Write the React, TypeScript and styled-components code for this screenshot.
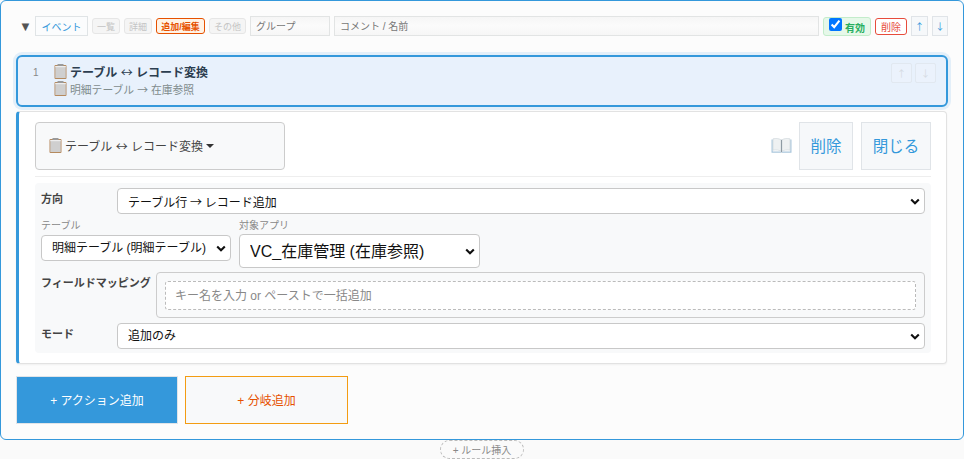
import styled, { createGlobalStyle } from "styled-components";

const chevron =
  "url(\"data:image/svg+xml,%3Csvg xmlns='http://www.w3.org/2000/svg' width='10' height='7' viewBox='0 0 10 7'%3E%3Cpath d='M1.2 1.4 5 5.2l3.8-3.8' fill='none' stroke='%23111' stroke-width='2.1'/%3E%3C/svg%3E\")";

const arrowFont = `"Noto Sans CJK JP", sans-serif`;

const GlobalStyle = createGlobalStyle`
  html, body {
    margin: 0;
    padding: 0;
    background: #fafafa;
    font-family: "Liberation Sans", "Noto Sans CJK JP", sans-serif;
    color: #2c3e50;
  }
  * {
    box-sizing: border-box;
  }
`;

const Page = styled.div`
  width: 964px;
  height: 459px;
  overflow: hidden;
`;

const RulePanel = styled.div`
  height: 440px;
  padding: 15px 15px 0;
  background: #fcfcfc;
  border: 1px solid #3498db;
  border-radius: 6px;
`;

const Header = styled.div`
  display: flex;
  align-items: center;
  gap: 4px;
  height: 20px;
  margin-bottom: 19px;
`;

const Toggle = styled.span`
  width: 15px;
  padding-left: 3px;
  font-size: 13px;
  color: #555;
`;

const EventButton = styled.button`
  width: 53px;
  height: 20px;
  padding: 0;
  font: inherit;
  font-size: 10px;
  color: #3498db;
  background: #fbfcfd;
  border: 1px solid #e0e4e6;
`;

const ScreenTag = styled.span<{ $w: number; $active?: boolean }>`
  display: flex;
  align-items: center;
  justify-content: center;
  width: ${({ $w }) => $w}px;
  height: 16px;
  font-size: 9px;
  font-weight: ${({ $active }) => ($active ? 700 : 400)};
  color: ${({ $active }) => ($active ? "#e65100" : "#c4c4c4")};
  background: ${({ $active }) => ($active ? "#fff3e6" : "#f5f5f5")};
  border: 1px solid ${({ $active }) => ($active ? "#e65100" : "#e6e6e6")};
  border-radius: 3px;
`;

const HeaderInput = styled.input<{ $w?: number }>`
  width: ${({ $w }) => ($w ? `${$w}px` : "auto")};
  flex: ${({ $w }) => ($w ? "none" : "1")};
  min-width: 0;
  height: 20px;
  padding: 0 5px;
  font: inherit;
  font-size: 10px;
  background: linear-gradient(#f6f6f6, #fbfbfb 50%, #f6f6f6);
  border: 1px solid #e2e4e4;
  &::placeholder {
    color: #777;
  }
`;

const EnabledLabel = styled.label`
  display: flex;
  align-items: flex-start;
  width: 48px;
  height: 19px;
  padding: 0 0 0 5px;
  font-size: 10px;
  font-weight: 700;
  line-height: 19px;
  color: #27ae60;
  background: #e6f8e9;
  border: 1px solid #c3eccb;
  border-radius: 3px;
  input {
    width: 13px;
    height: 13px;
    margin: 0 3px 0 0;
  }
  span {
    padding-top: 1px;
  }
`;

const DeleteSmall = styled.button`
  width: 32px;
  height: 17px;
  padding: 0;
  font: inherit;
  font-size: 10px;
  color: #e74c3c;
  background: #fff;
  border: 1px solid #e74c3c;
  border-radius: 3px;
`;

const ArrowButton = styled.button<{ $w: number }>`
  width: ${({ $w }) => $w}px;
  height: 20px;
  padding: 0;
  font-family: ${arrowFont};
  font-size: 9.5px;
  color: #3498db;
  background: #f6f8fa;
  border: 1px solid #e0e4e8;
`;

const Arrow = styled.span`
  font-family: ${arrowFont};
  font-weight: 400;
`;

const ActionRow = styled.div`
  display: flex;
  justify-content: space-between;
  height: 52px;
  margin-bottom: 4px;
  padding: 6px 10px 0 15px;
  background: #e8f1fc;
  border: 2px solid #3498db;
  border-radius: 6px;
  box-shadow: 0 0 0 3px #e3eff9;
`;

const ActionInfo = styled.div`
  display: grid;
  grid-template-columns: 21px auto;
  grid-template-rows: 17px 17px;
  align-items: center;
`;

const RowNumber = styled.span`
  padding-top: 1px;
  font-size: 10px;
  color: #888;
`;

const ActionTitle = styled.span`
  display: flex;
  align-items: center;
  gap: 3px;
  height: 17px;
  font-size: 12px;
  font-weight: 700;
  color: #2c3e50;
  white-space: pre;
`;

const ActionSub = styled.span`
  grid-column: 2;
  display: flex;
  align-items: center;
  gap: 3px;
  font-size: 10.8px;
  color: #7f8c8d;
  white-space: pre;
`;

const RowArrows = styled.div`
  display: flex;
  gap: 3px;
`;

const RowArrow = styled.button`
  width: 21px;
  height: 20px;
  padding: 0;
  font-family: ${arrowFont};
  font-size: 9.5px;
  color: #d5dbe2;
  background: #ebf2fc;
  border: 1px solid #e1e8f0;
  border-radius: 2px;
`;

const DetailCard = styled.div`
  width: 931px;
  height: 253px;
  padding: 10px 15px 0 16px;
  background: #fff;
  border: 1px solid #e2e2e2;
  border-left: 3px solid #3498db;
  border-radius: 4px;
  box-shadow: 0 1px 2px rgba(0, 0, 0, 0.05);
`;

const DetailTop = styled.div`
  display: flex;
  align-items: center;
  height: 55px;
  padding-bottom: 6px;
  border-bottom: 1px solid #eee;
`;

const TypeDropdown = styled.button`
  display: flex;
  align-items: center;
  gap: 3px;
  width: 250px;
  height: 48px;
  padding: 0 13px 2px;
  font: inherit;
  font-size: 12px;
  color: #444;
  background: #f8f9fa;
  border: 1px solid #ccc;
  border-radius: 4px;
  white-space: pre;
`;

const Caret = styled.span`
  width: 0;
  height: 0;
  margin-top: 2px;
  border: 4px solid transparent;
  border-top: 4px solid #333;
  border-bottom: 0;
`;

const BookWrap = styled.span`
  display: flex;
  margin-left: auto;
  margin-right: 7px;
`;

const CardButton = styled.button<{ $w: number; $ml?: number }>`
  width: ${({ $w }) => $w}px;
  height: 48px;
  margin-left: ${({ $ml }) => $ml ?? 0}px;
  padding: 0 0 2px;
  font: inherit;
  font-size: 15.5px;
  color: #3498db;
  background: #f6f8fa;
  border: 1px solid #e0e4e8;
`;

const FormArea = styled.div`
  display: flex;
  flex-direction: column;
  height: 170px;
  margin-top: 6px;
  padding: 5px 6px 0;
  background: #f8f9fa;
  border-radius: 4px;
`;

const FieldRow = styled.div<{ $mb?: number }>`
  display: flex;
  align-items: flex-start;
  margin-bottom: ${({ $mb }) => $mb ?? 0}px;
`;

const FieldLabel = styled.span<{ $w: number }>`
  flex: none;
  width: ${({ $w }) => $w}px;
  padding-top: 4px;
  font-size: 11px;
  font-weight: 700;
  line-height: 15px;
  color: #444;
`;

const NativeSelect = styled.select<{
  $w?: number;
  $h?: number;
  $fs?: number;
  $arrow?: boolean;
}>`
  appearance: none;
  display: block;
  width: ${({ $w }) => ($w ? `${$w}px` : "100%")};
  height: ${({ $h }) => $h ?? 26}px;
  padding: 0 22px 0 10px;
  font: inherit;
  font-family: ${({ $arrow }) => ($arrow ? arrowFont : "inherit")};
  font-size: ${({ $fs }) => $fs ?? 12}px;
  color: #111;
  background: #fff ${chevron} no-repeat right 4px center;
  border: 1px solid #c8c8c8;
  border-radius: 4px;
`;

const StackField = styled.div<{ $mr?: number }>`
  display: flex;
  flex-direction: column;
  margin-right: ${({ $mr }) => $mr ?? 0}px;
`;

const StackLabel = styled.span<{ $h: number }>`
  height: ${({ $h }) => $h}px;
  padding-top: 1px;
  font-size: 10px;
  line-height: 12px;
  color: #888;
`;

const MappingBox = styled.div`
  flex: 1;
  height: 46px;
  padding: 8px 8px 0;
  background: #f8f9fa;
  border: 1px solid #ccc;
  border-radius: 4px;
`;

const KeyInput = styled.input`
  display: block;
  width: 100%;
  height: 29px;
  padding: 0 9px;
  font: inherit;
  font-size: 12px;
  background: #fff;
  border: 1px dashed #bbb;
  border-radius: 3px;
  &::placeholder {
    color: #888;
  }
`;

const AddRow = styled.div`
  display: flex;
  align-items: stretch;
  gap: 7px;
  height: 48px;
  margin-top: 12px;
`;

const AddAction = styled.button`
  width: 162px;
  padding: 0 0 2px;
  font: inherit;
  font-size: 12px;
  color: #fff;
  background: #3498db;
  border: 1px solid #e0e4e8;
`;

const AddBranch = styled.button`
  width: 163px;
  padding: 0 0 2px;
  font: inherit;
  font-size: 12px;
  color: #e65100;
  background: #f8f9fa;
  border: 1px solid #f39c12;
`;

const InsertWrap = styled.div`
  display: flex;
  justify-content: center;
`;

const InsertPill = styled.button`
  width: 84px;
  height: 19px;
  padding: 0;
  font: inherit;
  font-size: 10px;
  color: #888;
  background: #fafafa;
  border: 1px dashed #bbb;
  border-radius: 10px;
`;

const ClipboardIcon = () => (
  <svg width="13" height="15" viewBox="0 0 13 15">
    <rect x="0.5" y="1" width="12" height="14" rx="1" fill="#b58a5e" />
    <rect x="1.3" y="2" width="10.4" height="12" fill="#cfcfcf" />
    <rect x="1.3" y="2" width="10.4" height="1.2" fill="#ededed" />
    <rect x="3.5" y="0" width="6" height="2" fill="#9a9a9a" />
  </svg>
);

const BookIcon = () => (
  <svg width="21" height="16" viewBox="0 0 21 16">
    <path d="M0.5 1.5h1.2v12h8.3v1.3H0.5z" fill="#a9c6dc" />
    <path d="M20.5 1.5h-1.2v12H11v1.3h9.5z" fill="#a9c6dc" />
    <path d="M2 .8c3-.6 6-.4 8 1v11.4c-2-1.2-5-1.5-8-1z" fill="#eef1f2" stroke="#c3ccd2" strokeWidth=".5" />
    <path d="M19 .8c-3-.6-6-.4-8 1v11.4c2-1.2 5-1.5 8-1z" fill="#eef1f2" stroke="#c3ccd2" strokeWidth=".5" />
    <path d="M10.5 1.8v12.6" stroke="#8e9aa3" strokeWidth="1" />
  </svg>
);

const App = () => (
  <Page>
    <GlobalStyle />
    <RulePanel>
      <Header>
        <Toggle>▼</Toggle>
        <EventButton>イベント</EventButton>
        <ScreenTag $w={28}>一覧</ScreenTag>
        <ScreenTag $w={28}>詳細</ScreenTag>
        <ScreenTag $w={49} $active>
          追加/編集
        </ScreenTag>
        <ScreenTag $w={37}>その他</ScreenTag>
        <HeaderInput $w={80} placeholder="グループ" />
        <HeaderInput placeholder="コメント / 名前" />
        <EnabledLabel>
          <input type="checkbox" defaultChecked />
          <span>有効</span>
        </EnabledLabel>
        <DeleteSmall>削除</DeleteSmall>
        <ArrowButton $w={17}>↑</ArrowButton>
        <ArrowButton $w={16}>↓</ArrowButton>
      </Header>

      <ActionRow>
        <ActionInfo>
          <RowNumber>1</RowNumber>
          <ActionTitle>
            <ClipboardIcon />
            <span>
              テーブル <Arrow>↔</Arrow> レコード変換
            </span>
          </ActionTitle>
          <ActionSub>
            <ClipboardIcon />
            <span>
              明細テーブル <Arrow>→</Arrow> 在庫参照
            </span>
          </ActionSub>
        </ActionInfo>
        <RowArrows>
          <RowArrow>↑</RowArrow>
          <RowArrow>↓</RowArrow>
        </RowArrows>
      </ActionRow>

      <DetailCard>
        <DetailTop>
          <TypeDropdown>
            <ClipboardIcon />
            <span>
              テーブル <Arrow>↔</Arrow> レコード変換
            </span>
            <Caret />
          </TypeDropdown>
          <BookWrap>
            <BookIcon />
          </BookWrap>
          <CardButton $w={54}>削除</CardButton>
          <CardButton $w={70} $ml={8}>
            閉じる
          </CardButton>
        </DetailTop>

        <FormArea>
          <FieldRow $mb={5}>
            <FieldLabel $w={76}>方向</FieldLabel>
            <NativeSelect $arrow defaultValue="a">
              <option value="a">テーブル行 → レコード追加</option>
            </NativeSelect>
          </FieldRow>
          <FieldRow $mb={4}>
            <StackField $mr={8}>
              <StackLabel $h={16}>テーブル</StackLabel>
              <NativeSelect $w={190}>
                <option>明細テーブル (明細テーブル)</option>
              </NativeSelect>
            </StackField>
            <StackField>
              <StackLabel $h={15}>対象アプリ</StackLabel>
              <NativeSelect $w={241} $h={34} $fs={16}>
                <option>VC_在庫管理 (在庫参照)</option>
              </NativeSelect>
            </StackField>
          </FieldRow>
          <FieldRow $mb={5}>
            <FieldLabel $w={115}>フィールドマッピング</FieldLabel>
            <MappingBox>
              <KeyInput placeholder="キー名を入力 or ペーストで一括追加" />
            </MappingBox>
          </FieldRow>
          <FieldRow>
            <FieldLabel $w={76}>モード</FieldLabel>
            <NativeSelect>
              <option>追加のみ</option>
            </NativeSelect>
          </FieldRow>
        </FormArea>
      </DetailCard>

      <AddRow>
        <AddAction>+ アクション追加</AddAction>
        <AddBranch>+ 分岐追加</AddBranch>
      </AddRow>
    </RulePanel>
    <InsertWrap>
      <InsertPill>+ ルール挿入</InsertPill>
    </InsertWrap>
  </Page>
);

export default App;
